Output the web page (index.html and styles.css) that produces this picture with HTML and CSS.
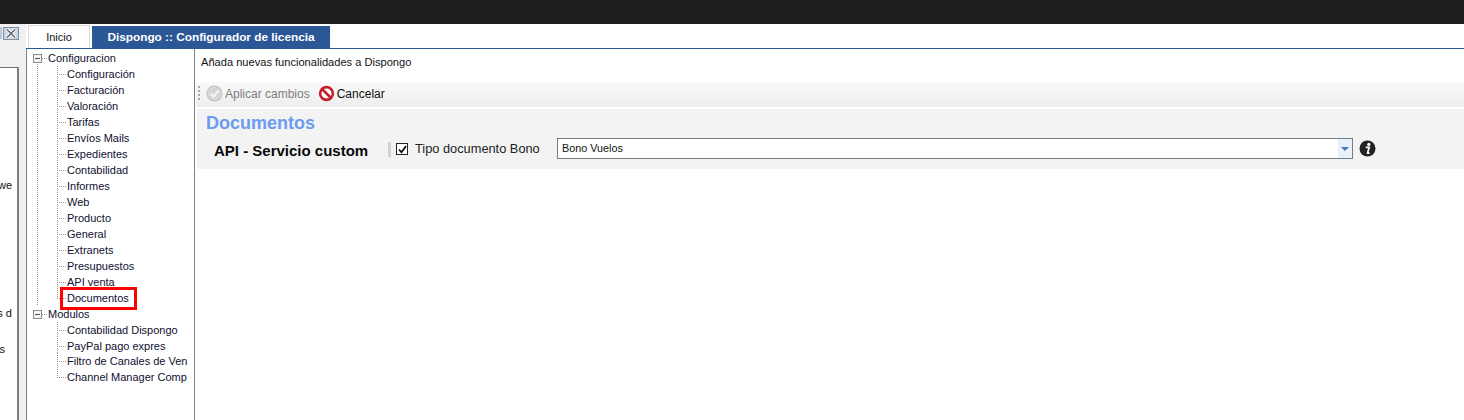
FILE: index.html
```html
<!DOCTYPE html>
<html lang="es">
<head>
<meta charset="utf-8">
<title>Dispongo :: Configurador de licencia</title>
<link rel="stylesheet" href="styles.css">
</head>
<body>
<div class="titlebar"></div>
<div class="app">
  <aside class="side">
    <div class="side-head">
      <span class="side-pin"></span>
      <span class="side-close">
        <svg width="16" height="13" viewBox="0 0 16 13"><rect x=".5" y=".5" width="15" height="12" fill="#c9d6e6" stroke="#7f8c9c"/><path d="M4 2.5l8 8M12 2.5l-8 8" stroke="#fff" stroke-width="3.4"/><path d="M4 2.5l8 8M12 2.5l-8 8" stroke="#666" stroke-width="1.6" fill="none"/></svg>
      </span>
    </div>
    <div class="side-body">
      <div class="side-frag side-frag-1">we</div>
      <div class="side-frag side-frag-2">s d</div>
      <div class="side-frag side-frag-3">s</div>
    </div>
    <div class="side-gutter"></div>
  </aside>
  <main class="main">
    <nav class="tabs">
      <div class="tab">Inicio</div>
      <div class="tab tab-active">Dispongo :: Configurador de licencia</div>
    </nav>
    <div class="workspace">
      <div class="tree">
        <div class="node node-open">
          <div class="node-head"><span class="expander"></span><span class="dash"></span>Configuracion</div>
          <div class="leaves">
            <div class="leaf">Configuración</div>
            <div class="leaf">Facturación</div>
            <div class="leaf">Valoración</div>
            <div class="leaf">Tarifas</div>
            <div class="leaf">Envíos Mails</div>
            <div class="leaf">Expedientes</div>
            <div class="leaf">Contabilidad</div>
            <div class="leaf">Informes</div>
            <div class="leaf">Web</div>
            <div class="leaf">Producto</div>
            <div class="leaf">General</div>
            <div class="leaf">Extranets</div>
            <div class="leaf">Presupuestos</div>
            <div class="leaf">API venta</div>
            <div class="leaf leaf-marked">Documentos<span class="marker"></span></div>
          </div>
        </div>
        <div class="node">
          <div class="node-head"><span class="expander"></span><span class="dash"></span>Modulos</div>
          <div class="leaves">
            <div class="leaf">Contabilidad Dispongo</div>
            <div class="leaf leaf-tight">PayPal pago expres</div>
            <div class="leaf">Filtro de Canales de Ven</div>
            <div class="leaf">Channel Manager Comp</div>
          </div>
        </div>
      </div>
      <section class="content">
        <p class="intro">Añada nuevas funcionalidades a Dispongo</p>
        <div class="toolbar">
          <span class="grip"></span>
          <button class="tool tool-disabled" type="button">
            <svg width="17" height="17" viewBox="0 0 17 17"><circle cx="8.5" cy="8.5" r="8" fill="#c4c4c4"/><circle cx="8.5" cy="8.5" r="6" fill="#d2d2d2" stroke="#e4e4e4"/><path d="M4.5 8.5l3 3 5-6" fill="none" stroke="#f4f4f4" stroke-width="2.4"/></svg>
            Aplicar cambios
          </button>
          <button class="tool" type="button">
            <svg width="17" height="17" viewBox="0 0 17 17"><circle cx="8.5" cy="8.5" r="6.4" fill="#fff" stroke="#c3202a" stroke-width="2.6"/><path d="M4 4l9 9" stroke="#c3202a" stroke-width="2.6"/></svg>
            Cancelar
          </button>
        </div>
        <div class="panel">
          <h1 class="panel-title">Documentos</h1>
          <div class="option-row">
            <h2 class="option-group">API - Servicio custom</h2>
            <span class="divider"></span>
            <label class="check">
              <span class="checkbox"><svg width="9" height="9" viewBox="0 0 9 9"><path d="M1 4.5l2.5 2.8L8 1" fill="none" stroke="#111" stroke-width="1.8"/></svg></span>
              Tipo documento Bono
            </label>
            <div class="combo">
              <span class="combo-value">Bono Vuelos</span>
              <span class="combo-btn"><span class="combo-arrow"></span></span>
            </div>
            <svg class="info" width="17" height="17" viewBox="0 0 17 17"><circle cx="8.5" cy="8.5" r="8" fill="#222"/><circle cx="9.8" cy="4.4" r="1.6" fill="#fff"/><path d="M6.7 7.4h3.5l-1.6 5.2q-.2.9.9.6l1-.5" fill="none" stroke="#fff" stroke-width="1.7"/></svg>
          </div>
        </div>
      </section>
    </div>
  </main>
</div>
</body>
</html>
```

FILE: styles.css
```css
* { box-sizing: border-box; }
html, body { margin: 0; height: 100%; overflow: hidden; }
body {
  width: 1464px;
  height: 420px;
  display: flex;
  flex-direction: column;
  background: #fff;
  color: #111;
  font: 11px/16px "Liberation Sans", Arial, sans-serif;
}
.titlebar { height: 24px; background: #1f1f1f; flex: none; }
.app { flex: 1; display: flex; min-height: 0; }

.side { width: 26px; flex: none; display: grid; grid-template-columns: 19px 1fr; grid-template-rows: 43px 1fr; background: #f0f0f0; }
.side-head { grid-column: 1 / 3; display: flex; padding-top: 3px; gap: 1px; align-items: flex-start; }
.side-pin { width: 2px; height: 12px; background: #b9c9dc; }
.side-close { display: block; height: 13px; line-height: 0; }
.side-body { background: #fff; border-top: 1px solid #707070; border-right: 2px solid #808080; overflow: hidden; position: relative; }
.side-frag { position: absolute; right: 5px; white-space: nowrap; }
.side-frag-1 { top: 109px; }
.side-frag-2 { top: 237px; }
.side-frag-3 { top: 273px; right: 12px; }
.side-gutter { background: #f0f0f0; }

.main { flex: 1; display: flex; flex-direction: column; min-width: 0; }
.tabs { height: 25px; display: flex; align-items: flex-end; gap: 2px; padding-left: 2px; border-bottom: 1px solid #2b5797; flex: none; }
.tab { width: 62px; height: 23px; border: 1px solid #dadada; border-bottom: 0; text-align: center; line-height: 23px; }
.tab-active { width: 238px; height: 22px; background: #2b5797; border: 0; color: #fff; font-weight: 700; line-height: 23px; font-size: 11.8px; }

.workspace { flex: 1; display: flex; min-height: 0; }
.tree { width: 169px; flex: none; border: 1px solid #808080; border-top: 0; border-bottom: 0; padding-top: 1px; overflow: hidden; white-space: nowrap; color: #101030; }
.node { padding-left: 6px; }
.node-open { background: repeating-linear-gradient(to bottom, #999 0 1px, transparent 1px 2px) 10px 10px / 1px calc(100% - 10px) no-repeat; }
.node-head { height: 16px; display: flex; align-items: center; }
.expander { width: 9px; height: 9px; border: 1px solid #8c8c8c; background: linear-gradient(#555, #555) center / 5px 1px no-repeat, #f4f4f4; flex: none; }
.dash { width: 6px; height: 1px; background: repeating-linear-gradient(to right, #999 0 1px, transparent 1px 2px); }
.leaves { padding-left: 24px; }
.leaf {
  height: 16px;
  padding-left: 10px;
  position: relative;
  background:
    repeating-linear-gradient(to bottom, #999 0 1px, transparent 1px 2px) 0 0 / 1px 100% no-repeat,
    repeating-linear-gradient(to right, #999 0 1px, transparent 1px 2px) 0 8px / 9px 1px no-repeat;
}
.leaf:last-child { background-size: 1px 8px, 9px 1px; }
.leaf-tight { height: 15px; }
.marker { position: absolute; left: 3px; top: -3px; width: 77px; height: 23px; border: 3px solid #ff0000; }

.content { flex: 1; min-width: 0; background: #fff; padding-left: 1px; }
.intro { margin: 0; padding: 5px 0 0 5px; height: 33px; font-size: 11.1px; }
.toolbar { height: 25px; padding: 0 0 2px 2px; display: flex; align-items: center; background: linear-gradient(#fafafa, #ededed); border-radius: 3px 0 0 3px; }
.grip { width: 2px; height: 15px; margin-right: 6px; background: repeating-linear-gradient(to bottom, #a8a8a8 0 2px, transparent 2px 4px); }
.tool { display: inline-flex; align-items: center; gap: 2px; border: 0; background: none; padding: 0; margin-right: 8px; font: 12px/16px "Liberation Sans", Arial, sans-serif; color: #111; }
.tool-disabled { color: #7d7d7d; }
.panel { margin: 2px 0 0 1px; height: 60px; background: #f3f3f3; padding: 4px 0 0 9px; }
.panel-title { margin: 0; font-size: 18px; line-height: 20px; font-weight: 700; color: #6c9bf0; }
.option-row { display: flex; align-items: center; height: 24px; padding-left: 8px; margin-top: 4px; }
.option-group { margin: 3px 0 0; width: 174px; font-size: 15px; line-height: 18px; font-weight: 700; color: #0a0a0a; flex: none; white-space: nowrap; }
.divider { width: 3px; height: 15px; background: #d2d2d2; margin-right: 5px; flex: none; }
.check { display: flex; align-items: center; width: 161px; font-size: 12.8px; color: #222; flex: none; }
.checkbox { width: 12px; height: 12px; border: 1px solid #222; background: #fff; margin-right: 7px; display: inline-flex; align-items: center; justify-content: center; }
.combo { width: 796px; height: 21px; margin-bottom: 1px; flex: none; background: #fff; border: 1px solid #7a7a7a; display: flex; align-items: center; justify-content: space-between; font-size: 10.8px; padding-left: 4px; }
.combo-value { padding-bottom: 2px; }
.combo-btn { width: 14px; height: 19px; background: #e8f1fb; display: flex; align-items: center; justify-content: center; }
.combo-arrow { width: 0; height: 0; border: 4px solid transparent; border-top: 4px solid #4a78b8; border-bottom: 0; }
.info { margin: 0 0 2px 6px; flex: none; }
```
